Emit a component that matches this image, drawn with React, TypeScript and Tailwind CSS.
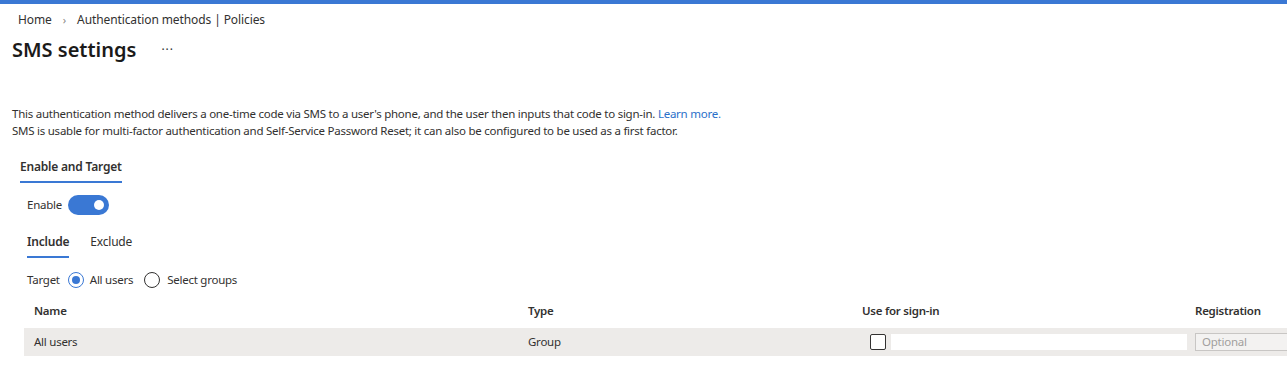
export default function App() {
    return (
        <div className="h-[386px] w-[1287px] overflow-hidden bg-white font-['Segoe_UI','Noto_Sans',sans-serif] text-[11.5px] tracking-[-0.25px] text-[#323130]">
            <div className="h-[4px] bg-[#3a78d4]" />

            {/* breadcrumb */}
            <div className="mt-[8px] flex items-center pl-[18px] text-[12px] leading-[16px] tracking-[-0.1px]">
                <span>Home</span>
                <span className="mx-[11px] text-[11px] text-[#8a8886]">›</span>
                <span>Authentication methods | Policies</span>
            </div>

            <div className="mt-[8px] flex items-center pl-[12px] tracking-normal">
                <h1 className="text-[20px] font-semibold leading-[28px] text-[#1b1a19]">
                    SMS settings
                </h1>
                <span className="ml-[25px] text-[12px] leading-[28px] tracking-[1px]">···</span>
            </div>

            <div className="mt-[41px] pl-[12px] leading-[17px]">
                <p>
                    This authentication method delivers a one-time code via SMS to a user's phone, and the user then
                    inputs that code to sign-in. <span className="text-[#2a6fc9]">Learn more.</span>
                </p>
                <p>
                    SMS is usable for multi-factor authentication and Self-Service Password Reset; it can also be
                    configured to be used as a first factor.
                </p>
            </div>

            {/* section tab */}
            <div className="mt-[19px] pl-[20px]">
                <div className="inline-block border-b-2 border-[#3a78d4] pb-[6px] text-[12px] font-semibold leading-[16px] tracking-[-0.2px]">
                    Enable and Target
                </div>
            </div>

            <div className="mt-[12px] flex items-center pl-[27px]">
                <span className="leading-[16px]">Enable</span>
                <div className="ml-[6px] flex h-[20px] w-[41px] items-center justify-end rounded-full bg-[#3a78d4] pr-[5px]">
                    <div className="h-[10px] w-[10px] rounded-full bg-white" />
                </div>
            </div>

            {/* include / exclude */}
            <div className="mt-[19px] flex pl-[27px] leading-[16px]">
                <div className="border-b-2 border-[#3a78d4] pb-[6px] text-[12px] font-semibold tracking-[-0.2px]">Include</div>
                <div className="ml-[21px] pb-[8px] text-[12px] tracking-[-0.2px]">Exclude</div>
            </div>

            <div className="mt-[14px] flex items-center pl-[27px] leading-[16px]">
                <span>Target</span>
                <span className="ml-[8px] flex h-[16px] w-[16px] items-center justify-center rounded-full border border-[#3a78d4]">
                    <span className="h-[8px] w-[8px] rounded-full bg-[#3a78d4]" />
                </span>
                <span className="ml-[6px]">All users</span>
                <span className="ml-[11px] h-[16px] w-[16px] rounded-full border border-[#323130]" />
                <span className="ml-[7px]">Select groups</span>
            </div>

            {/* table */}
            <div className="mt-[15px] ml-[24px] flex font-semibold leading-[16px]">
                <div className="w-[504px] pl-[10px]">Name</div>
                <div className="w-[334px]">Type</div>
                <div className="w-[333px]">Use for sign-in</div>
                <div className="flex-1">Registration</div>
            </div>
            <div className="mt-[9px] ml-[24px] flex h-[28px] items-center bg-[#edebe9] leading-[16px]">
                <div className="w-[504px] shrink-0 pl-[10px]">All users</div>
                <div className="w-[334px] shrink-0">Group</div>
                <div className="flex w-[333px] shrink-0 items-center pl-[8px]">
                    <span className="h-[16px] w-[16px] shrink-0 rounded-[2px] border border-[#323130] bg-white" />
                    <span className="ml-[5px] h-[16px] w-[296px] bg-white" />
                </div>
                <div className="h-[18px] w-[110px] shrink-0 border border-[#c8c6c4] bg-[#f3f2f1] pl-[6px] leading-[16px] text-[#a19f9d]">
                    Optional
                </div>
            </div>
        </div>
    );
}
